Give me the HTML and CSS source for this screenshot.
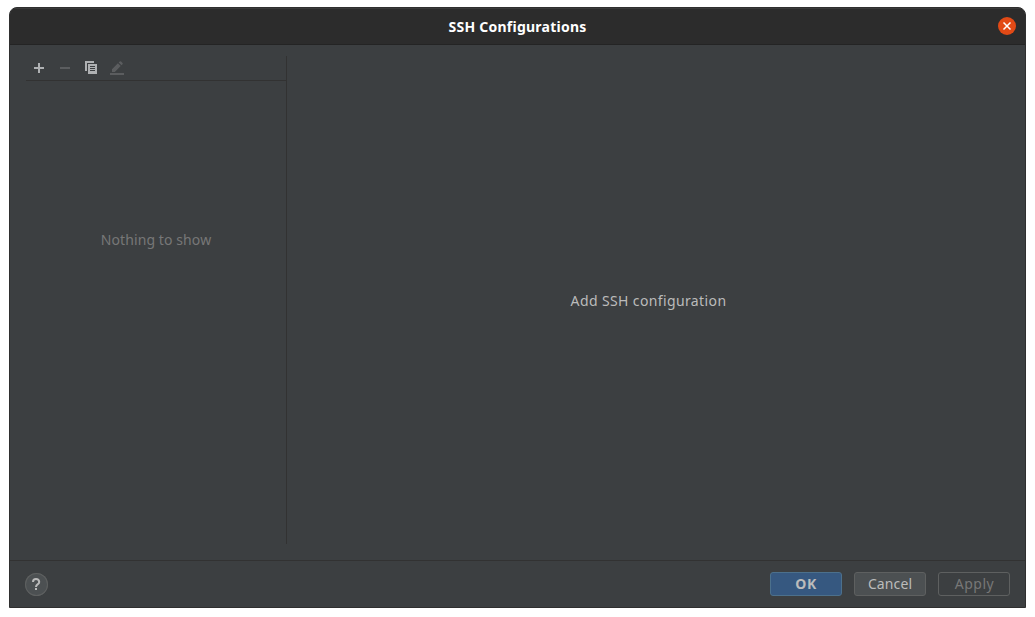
FILE: index.html
```
<!DOCTYPE html>
<html lang="en">
<head>
<meta charset="utf-8">
<title>SSH Configurations</title>
<link rel="stylesheet" href="styles.css">
</head>
<body>
<div class="window">
  <header class="titlebar">
    <span></span>
    <h1 class="title">SSH Configurations</h1>
    <button class="close" aria-label="Close"><svg width="18" height="18" viewBox="0 0 18 18"><path d="M5.500 5.500l7 7M12.500 5.500l-7 7"/></svg></button>
  </header>
  <main class="content">
    <aside class="sidebar">
      <div class="toolbar">
        <svg class="icon" width="16" height="16" viewBox="0 0 16 16"><path d="M7 3h2v4h4v2H9v4H7V9H3V7h4z"/></svg>
        <svg class="icon disabled" width="16" height="16" viewBox="0 0 16 16"><path d="M3 7h10v2H3z"/></svg>
        <svg class="icon" width="16" height="16" viewBox="0 0 16 16"><path d="M2 1h9v2H4v8H2z"/><path fill-rule="evenodd" d="M5 4h9v10H5zM7 6v1h5V6zM7 8v1h5V8zM7 10v1h5v-1z"/></svg>
        <svg class="icon disabled" width="16" height="16" viewBox="0 0 16 16"><path d="M1 13h14v2H1zM3 12V9.200L8.900 3.300l2.800 2.800L5.800 12zM9.700 2.500l1-1q.7-.7 1.400 0l1.400 1.400q.7.7 0 1.400l-1 1z"/></svg>
      </div>
      <div class="empty"><span class="empty-text">Nothing to show</span></div>
    </aside>
    <section class="details"><span class="details-text">Add SSH configuration</span></section>
  </main>
  <footer class="footer">
    <button class="help" aria-label="Help"><svg width="23" height="23" viewBox="0 0 23 23"><path d="M8 9Q8 6 11 6T14.200 8.900Q14.200 10.200 12.800 11.200Q11 12.400 11 14"/><path class="dot" d="M10 15h2v2h-2z"/></svg></button>
    <div class="actions">
      <button class="btn primary"><span>OK</span></button>
      <button class="btn cancel"><span>Cancel</span></button>
      <button class="btn inactive"><span>Apply</span></button>
    </div>
  </footer>
</div>
</body>
</html>
```
FILE: styles.css
```
* { box-sizing: border-box; }
body {
  margin: 0;
  background: #fff;
  font-family: "Noto Sans", sans-serif;
  font-size: 14px;
  color: #bbb;
}
button { font: inherit; color: inherit; padding: 0; margin: 0; }
svg { display: block; }
.window {
  width: 1017px;
  height: 601px;
  margin: 7px 0 0 9px;
  display: flex;
  flex-direction: column;
  background: #3c3f41;
  border: 1px solid #2f2f2f;
  border-radius: 8px 8px 0 0;
  overflow: hidden;
}
.titlebar {
  height: 37px;
  flex: none;
  display: grid;
  grid-template-columns: 1fr auto 1fr;
  align-items: center;
  padding: 0 9px;
  background: #2c2c2c;
  border-top: 1px solid #3a3a3a;
  border-bottom: 1px solid #242424;
}
.title {
  margin: 0;
  font-size: 14px;
  line-height: 20px;
  font-weight: 700;
  letter-spacing: 0.24px;
  color: #fff;
}
.close {
  justify-self: end;
  width: 18px;
  height: 18px;
  margin-bottom: 1px;
  border: 0;
  border-radius: 50%;
  background: #e24a16;
}
.close path { fill: none; stroke: #fff; stroke-width: 1.5; }
.content {
  flex: 1;
  display: flex;
  padding: 11px 15px 16px 16px;
}
.sidebar {
  width: 261px;
  display: flex;
  flex-direction: column;
  border-right: 1px solid #323232;
}
.toolbar {
  height: 25px;
  display: flex;
  gap: 10px;
  padding: 4px 0 0 5px;
  border-bottom: 1px solid #323232;
}
.icon { fill: #afb1b3; }
.icon.disabled { fill: #5b5d5f; }
.empty {
  padding-top: 149px;
  line-height: 20px;
  text-align: center;
  letter-spacing: 0.1px;
  color: #777;
}
.details {
  flex: 1;
  display: flex;
  align-items: center;
  justify-content: center;
  letter-spacing: 0.38px;
}
.footer {
  height: 47px;
  display: flex;
  align-items: center;
  justify-content: space-between;
  padding: 0 15px;
  border-top: 1px solid #323232;
}
.help {
  width: 23px;
  height: 23px;
  border: 0;
  border-radius: 50%;
  background: #4c5052;
  box-shadow: inset 0 0 0 1px #5e6060;
}
.help path { fill: none; stroke: #bbb; stroke-width: 2; }
.help .dot { fill: #bbb; stroke: none; }
.actions { display: flex; gap: 12px; }
.btn {
  width: 72px;
  height: 24px;
  line-height: 20px;
  border: 1px solid #5e6060;
  border-radius: 3px;
  background: #4c5052;
}
.btn.primary {
  background: #365880;
  border-color: #4c708c;
  font-weight: 700;
  letter-spacing: 0.5px;
}
.btn.cancel { letter-spacing: 0.1px; }
.btn.inactive {
  padding-left: 1px;
  background: transparent;
  color: #777;
  letter-spacing: 0.5px;
}
```
